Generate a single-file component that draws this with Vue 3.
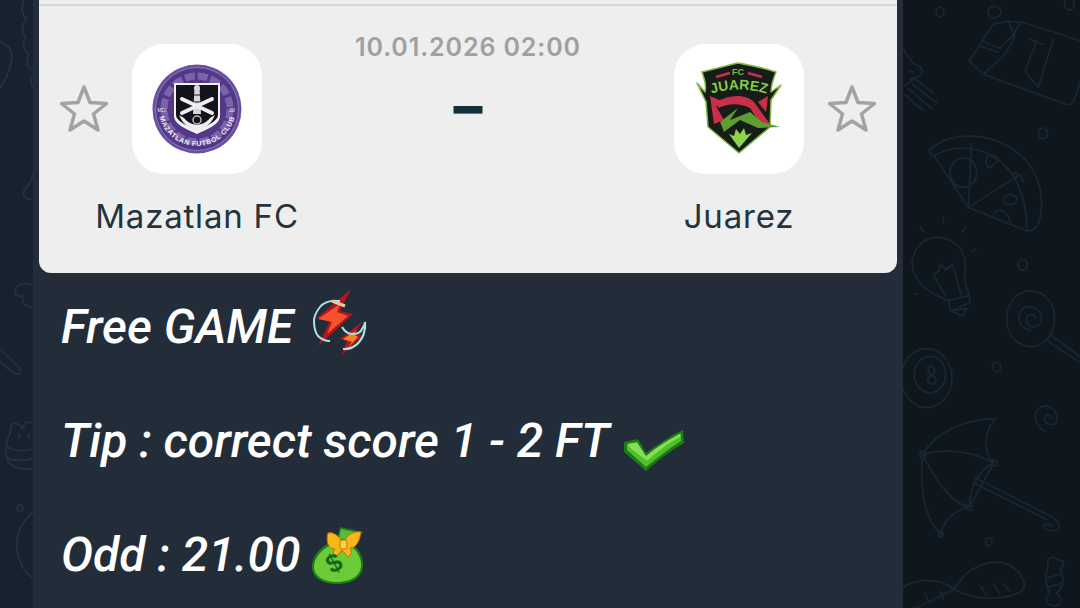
<template>
  <div class="screen">
    <!-- левая полоска обоев -->
    <div class="wall wall-left">
      <svg viewBox="0 0 99 1568" preserveAspectRatio="none">
        <g class="doodle">
          <path d="M72 0C62 20 66 40 80 48C66 60 62 84 78 96C64 112 70 132 88 138C76 160 84 176 98 182" />
          <path d="M98 195C92 205 92 215 98 225" />
          <path d="M0 108C18 112 34 125 36 145C36 170 16 205 0 228" />
          <path d="M98 450C94 475 80 480 72 492C66 505 78 516 98 514" />
          <path d="M98 735C80 728 50 730 45 748C42 762 60 768 68 762C62 780 80 795 98 792" />
          <path d="M0 900L55 945Q70 960 55 965Q40 965 0 932" />
          <path d="M98 1092C85 1085 70 1090 68 1105C50 1085 28 1088 32 1112C20 1135 12 1165 24 1190C45 1212 80 1212 98 1208" />
          <path d="M18 1150C45 1165 75 1165 98 1158M24 1182C50 1190 75 1188 98 1182" />
          <path d="M58 1118V1128M86 1118V1128" />
          <circle cx="60" cy="1311" r="9" />
          <path d="M98 1322C65 1345 50 1375 50 1408C52 1445 72 1475 98 1490" />
        </g>
      </svg>
    </div>

    <div class="bubble">
      <section class="card">
        <div class="card-line"></div>
        <div class="match">
          <div class="side">
            <svg class="star" viewBox="0 0 48 48"><path d="M24 3L30 18.500L46.500 19.500L33.500 30L38 46L24 37L10 46L14.500 30L1.500 19.500L18 18.500Z" /></svg>
            <div class="team">
              <div class="logo">
                <svg viewBox="0 0 130 130">
                  <circle cx="65" cy="65" r="44.500" fill="#6b4fa0" />
                  <circle cx="65" cy="65" r="41.500" fill="#533888" stroke="#8c74bd" stroke-width="1" />
                  <circle cx="65" cy="65" r="33" fill="none" stroke="#9a86c6" stroke-width="7" stroke-dasharray="10 3" opacity=".55" />
                  <path id="mazRing" d="M26 63A39 39 0 0 0 104 63" fill="none" />
                  <text class="maz-ring"><textPath href="#mazRing" startOffset="50%" text-anchor="middle">MAZATLAN FUTBOL CLUB</textPath></text>
                  <text class="maz-side" x="30" y="68" text-anchor="middle">MDI</text>
                  <text class="maz-side" x="100" y="68" text-anchor="middle">20</text>
                  <path d="M42 39H88V72C88 80 76 85 65 90C54 85 42 80 42 72Z" fill="#f2f2f4" />
                  <path d="M44 41H86V71C86 77 75 82 65 86C55 82 44 77 44 71Z" fill="#12131b" />
                  <path d="M62.500 44H67.500L69 70H61Z" fill="#d5d5da" />
                  <circle cx="65" cy="44" r="3" fill="#d5d5da" />
                  <path d="M61 51H69M60 58H70" stroke="#12131b" stroke-width="1.200" />
                  <path d="M50 55L80 69M80 55L50 69" stroke="#eeeef0" stroke-width="4" stroke-linecap="round" />
                  <path d="M47 71C52 83 60 84 65 87C70 84 78 83 83 71L78 74C74 79 70 80 65 81C60 80 56 79 52 74Z" fill="#eeeef0" />
                  <circle cx="65" cy="76" r="4" fill="none" stroke="#b9b9c0" stroke-width="1.500" />
                </svg>
              </div>
              <span class="team-name">Mazatlan FC</span>
            </div>
          </div>

          <div class="center">
            <span class="date">10.01.2026 02:00</span>
            <span class="score">–</span>
          </div>

          <div class="side">
            <div class="team">
              <div class="logo">
                <svg viewBox="0 0 130 130">
                  <path d="M23 39L31 48C33 40 30 34 28 28C45 24 55 21 64 19C75 21 90 24 102 28C100 34 97 40 97 48L107 41L97 56L96 83L65 109L34 83L32 58Z" fill="#161c17" stroke="#7dbb3e" stroke-width="1.500" stroke-linejoin="round" />
                  <path d="M36 52L50 58L42 62L50 76L40 80Z" fill="#c92f47" />
                  <path d="M42 58C56 50 72 50 80 58L96 80L88 82L76 64C64 58 54 60 44 64Z" fill="#c92f47" />
                  <path d="M94 52L92 68L84 58Z" fill="#c92f47" />
                  <path d="M46 78L64 64L56 76L76 68L88 78L106 83L84 84L66 76L50 88Z" fill="#5e9c34" />
                  <path d="M65 104L55 90L60 92L62 85L66 90L70 84L72 91L78 89Z" fill="#8fd34a" />
                  <path d="M42 33L56 29M74 29L88 33" stroke="#c92f47" stroke-width="2.500" />
                  <path id="juaRing" d="M33 51Q65 40 97 51" fill="none" />
                  <text class="jua-fc" x="64" y="31" text-anchor="middle">FC</text>
                  <text class="jua-name"><textPath href="#juaRing" startOffset="50%" text-anchor="middle">JUAREZ</textPath></text>
                </svg>
              </div>
              <span class="team-name">Juarez</span>
            </div>
            <svg class="star" viewBox="0 0 48 48"><path d="M24 3L30 18.500L46.500 19.500L33.500 30L38 46L24 37L10 46L14.500 30L1.500 19.500L18 18.500Z" /></svg>
          </div>
        </div>
      </section>

      <div class="message">
        <p>
          Free GAME
          <svg class="emoji bolt" viewBox="0 0 56 68">
            <path d="M39 0L5 29L18 32L6 57L41 25L28 22Z" fill="#b3161d" />
            <path d="M28 15L6 30L20 33L15 45L36 27L25 23Z" fill="#f5522d" />
            <path d="M51 32L28 50L35 52L30 66L51 47L43 43Z" fill="#b3161d" />
            <path d="M46 40L31 50L40 53L35 60L46 48L41 45Z" fill="#f5812d" />
            <path d="M28 12C20 11 12 13 8 18C4 23 2 27 2 32C2 38 3 43 6 47C9 50 13 52 18 52" fill="none" stroke="#a6e4df" stroke-width="2" />
            <path d="M20 12L33 17" stroke="#e6c9a6" stroke-width="3" />
            <path d="M30 38C33 43 37 45 40 45C45 45 49 43 50 40C52 37 53 35 53 33C54 40 52 44 51 47C48 53 45 56 41 58C38 60 34 60 31 60" fill="none" stroke="#a6e4df" stroke-width="2.200" />
          </svg>
        </p>
        <p>
          Tip : correct score 1 - 2 FT
          <svg class="emoji check" viewBox="0 0 62 43">
            <path d="M1 13L15 10L23 24C35 15 47 7 60 1L61 14C47 22 34 32 23 42L1 23Z" fill="#1d7a18" />
            <path d="M4 15L14 13L23 28C35 18 47 10 58 4L58 12C45 20 33 30 23 38L4 21Z" fill="#4fc02a" />
            <path d="M5 15L14 13.500L23 27C35 17 47 10 57 5L57 8C45 14 34 23 24 32L6 18Z" fill="#86de58" />
          </svg>
        </p>
        <p>
          Odd : 21.00
          <svg class="emoji bag" viewBox="0 0 54 59">
            <path d="M29 1L52 6L41 18C49 24 53 32 52 41C51 52 40 58 26 58C12 58 1 52 1 41C1 31 8 22 18 17L26 14Z" fill="#1e7d1a" />
            <path d="M20 19C10 24 3 32 3 41C3 50 13 56 26 56C38 56 49 51 50 41C51 32 46 24 38 19Z" fill="#6ccb36" />
            <path d="M30 3L49 7L40 16L28 12Z" fill="#58bb30" />
            <path d="M31 15C26 8 21 6 17 7C15 13 16 23 24 23C21 27 22 30 25 31L31 24L37 31C40 30 41 26 39 22C46 22 49 13 50 6C44 5 36 8 34 15Z" fill="#f7b718" stroke="#c66d10" stroke-width="1" />
            <rect x="29" y="14" width="7" height="9" rx="2" fill="#ffd23f" stroke="#c66d10" stroke-width="1" />
            <text class="bag-sign" x="23" y="46" text-anchor="middle" transform="rotate(-28 23 37)">$</text>
          </svg>
        </p>
      </div>
    </div>

    <!-- правая часть с обоями -->
    <div class="wall wall-right">
      <svg viewBox="69 0 531 1568" preserveAspectRatio="none">
        <g class="doodle">
          <!-- шоколадка -->
          <path d="M268 158L340 62L385 55L430 58L600 105M310 192L555 268Q578 276 588 245L600 210M268 158L310 192" />
          <path d="M385 55L405 95L375 140L310 192M420 60L400 90L360 125M305 105L360 125M300 118L355 135" />
          <path d="M470 105L435 185L475 225L520 100M445 100L490 115" />
          <path d="M325 25C335 12 360 15 365 30C358 48 330 52 325 38Z" />
          <path d="M555 0C550 18 560 28 575 25C585 15 582 5 580 0" />
          <!-- кекс -->
          <path d="M70 125C80 145 95 160 108 168C130 172 132 188 118 195L72 222" />
          <path d="M98 218L170 265M85 228L155 280M75 245L130 285M100 200L160 240" />
          <path d="M85 185C92 180 98 182 100 190M90 205L97 200" />
          <!-- пицца -->
          <path d="M150 385C250 310 480 360 485 520C485 570 470 600 440 595L265 535L165 405Q145 398 150 385Z" />
          <path d="M165 400C270 350 440 400 440 590M275 370L265 535L420 450" />
          <ellipse cx="250" cy="445" rx="40" ry="38" />
          <path d="M318 410C325 395 345 400 355 410C350 425 335 420 335 430C322 435 315 425 318 410Z" />
          <path d="M368 518C375 500 395 495 410 510C410 528 385 535 368 518Z" />
          <path d="M340 552C355 535 380 540 392 572M395 450C410 440 425 455 432 470" />
          <!-- лампа -->
          <path d="M205 775C160 760 100 735 96 680C100 635 140 610 175 612C225 615 265 650 255 700C250 720 258 740 268 762" />
          <path d="M205 775L268 762L270 780L212 802ZM215 802L262 795L248 815Z" />
          <path d="M195 760L160 708L175 700L182 682L198 695L218 682L245 765" />
          <path d="M120 585L130 597M190 560V575M258 585L248 597M275 648L288 642M105 758H111" />
          <circle cx="489" cy="344" r="14" />
          <circle cx="428" cy="683" r="14" />
          <circle cx="350" cy="947" r="12" />
          <circle cx="180" cy="31" r="12" />
          <circle cx="326" cy="1397" r="10" />
          <!-- леденец -->
          <circle cx="452" cy="822" r="72" />
          <path d="M452 850C420 850 408 820 425 800C445 780 485 795 485 825C480 845 450 850 440 830C435 810 460 805 468 820" />
          <path d="M510 862L600 920M500 878L600 935" />
          <!-- шар -->
          <circle cx="140" cy="975" r="76" />
          <circle cx="150" cy="966" r="47" />
          <path d="M150 945C170 945 165 965 155 968C175 975 170 992 155 990C140 988 140 972 155 968C145 965 140 948 150 945Z" />
          <path d="M497 1112C470 1105 460 1075 470 1060C490 1035 530 1050 532 1080C530 1098 505 1100 495 1085C490 1070 510 1065 515 1078" />
          <!-- зонт -->
          <path d="M128 1172C170 1110 260 1080 348 1080C315 1105 305 1160 340 1195L268 1308C215 1300 160 1230 128 1172Z" />
          <path d="M128 1172C120 1240 125 1330 182 1378C190 1345 220 1315 268 1308M128 1172C200 1155 290 1165 340 1195C300 1210 270 1250 268 1308" />
          <circle cx="128" cy="1172" r="8" />
          <circle cx="343" cy="1195" r="8" />
          <circle cx="268" cy="1308" r="8" />
          <circle cx="182" cy="1378" r="7" />
          <path d="M285 1232L510 1330Q540 1345 538 1360C530 1375 495 1370 490 1358C495 1350 510 1350 518 1358M280 1245L500 1340" />
          <!-- лист и конфета -->
          <path d="M69 1515C110 1490 180 1490 222 1520C260 1460 330 1440 385 1455C425 1475 445 1510 425 1525C370 1550 290 1550 222 1520C170 1540 120 1568 100 1568" />
          <path d="M300 1510L320 1535M340 1505L358 1530M370 1505L390 1525M135 1530L145 1550M180 1525L190 1545" />
          <path d="M505 1455C495 1440 520 1430 535 1445C555 1440 555 1460 540 1468C555 1490 550 1515 530 1530C550 1545 545 1565 520 1562C495 1560 495 1540 510 1530C495 1510 495 1480 505 1455Z" />
          <path d="M502 1490L545 1480M505 1515L540 1505" />
        </g>
      </svg>
    </div>
  </div>
</template>

<script setup>
</script>

<style>
html,
body {
  margin: 0;
  background: #0f1820;
}
</style>

<style scoped>
.screen {
  display: flex;
  width: 1080px;
  height: 608px;
  overflow: hidden;
}

/* Обои */
.wall {
  flex-shrink: 0;
  height: 608px;
}

.wall svg {
  display: block;
  width: 100%;
  height: 100%;
}

.wall-left {
  width: 33px;
  background: #16232f;
}

.wall-right {
  width: 177px;
  background: #0e171e;
}

.doodle {
  fill: none;
  stroke: #1a2630;
  stroke-width: 1.800;
  stroke-linecap: round;
  stroke-linejoin: round;
}

.doodle * {
  vector-effect: non-scaling-stroke;
}

.wall-left .doodle {
  stroke: #243240;
}

/* Сообщение */
.bubble {
  width: 870px;
  flex-shrink: 0;
  padding: 0 6px;
  box-sizing: border-box;
  background: #232d39;
}

.card {
  background: #eeeeee;
  border-radius: 0 0 12px 12px;
  padding-top: 4px;
  height: 273px;
  box-sizing: border-box;
}

.card-line {
  height: 2px;
  background: #d5d7d7;
}

.match {
  display: flex;
  justify-content: space-between;
  padding: 38px 21px 0;
}

.side {
  display: flex;
  gap: 24px;
}

.star {
  width: 48px;
  height: 48px;
  margin-top: 40px;
  fill: none;
  stroke: #a3a3a3;
  stroke-width: 3.500;
  stroke-linejoin: round;
}

.team {
  width: 130px;
  display: flex;
  flex-direction: column;
  align-items: center;
}

.logo {
  width: 130px;
  height: 130px;
  background: #ffffff;
  border-radius: 32px;
}

.logo svg {
  display: block;
  width: 130px;
  height: 130px;
}

.team-name {
  margin-top: 22px;
  font-family: Inter, "Noto Sans", sans-serif;
  font-size: 33px;
  line-height: 40px;
  letter-spacing: 0.8px;
  white-space: nowrap;
  color: #25333c;
}

.center {
  flex: 1;
  display: flex;
  flex-direction: column;
  align-items: center;
}

.date {
  margin-top: -12px;
  font-family: Inter, "Noto Sans", sans-serif;
  font-size: 25px;
  font-weight: 600;
  line-height: 30px;
  letter-spacing: 0.9px;
  color: #a0a0a0;
}

.score {
  font-family: Inter, "Noto Sans", sans-serif;
  font-size: 58px;
  font-weight: 800;
  line-height: 40px;
  margin-top: 24px;
  color: #14303c;
}

/* Текст сообщения */
.message {
  padding: 25px 0 0 22px;
  font-family: Roboto, "Liberation Sans", sans-serif;
  font-size: 48px;
  font-style: italic;
  font-weight: 500;
  line-height: 57px;
  color: #ffffff;
}

.message p {
  height: 57px;
  margin: 0 0 57px;
  white-space: nowrap;
}

.emoji {
  display: inline-block;
  margin-top: -20px;
}

.bolt {
  width: 56px;
  height: 68px;
  margin-left: 7px;
  vertical-align: -14px;
}

.check {
  width: 62px;
  height: 43px;
  margin-left: 3px;
  vertical-align: -15px;
}

.bag {
  width: 54px;
  height: 59px;
  margin-left: -1px;
  vertical-align: -14px;
}

.bag-sign {
  font-family: "Liberation Sans", sans-serif;
  font-size: 26px;
  font-style: normal;
  font-weight: 700;
  fill: #0d6a19;
}

.maz-ring {
  font-family: "Liberation Sans", sans-serif;
  font-size: 7px;
  font-weight: 700;
  letter-spacing: 0.6px;
  fill: #f3f0fa;
}

.maz-side {
  font-family: "Liberation Sans", sans-serif;
  font-size: 5px;
  fill: #f3f0fa;
}

.jua-fc {
  font-family: "Liberation Sans", sans-serif;
  font-size: 9px;
  font-weight: 700;
  fill: #7dbb3e;
}

.jua-name {
  font-family: "Liberation Sans", sans-serif;
  font-size: 14px;
  font-weight: 700;
  fill: #86cc45;
}
</style>
